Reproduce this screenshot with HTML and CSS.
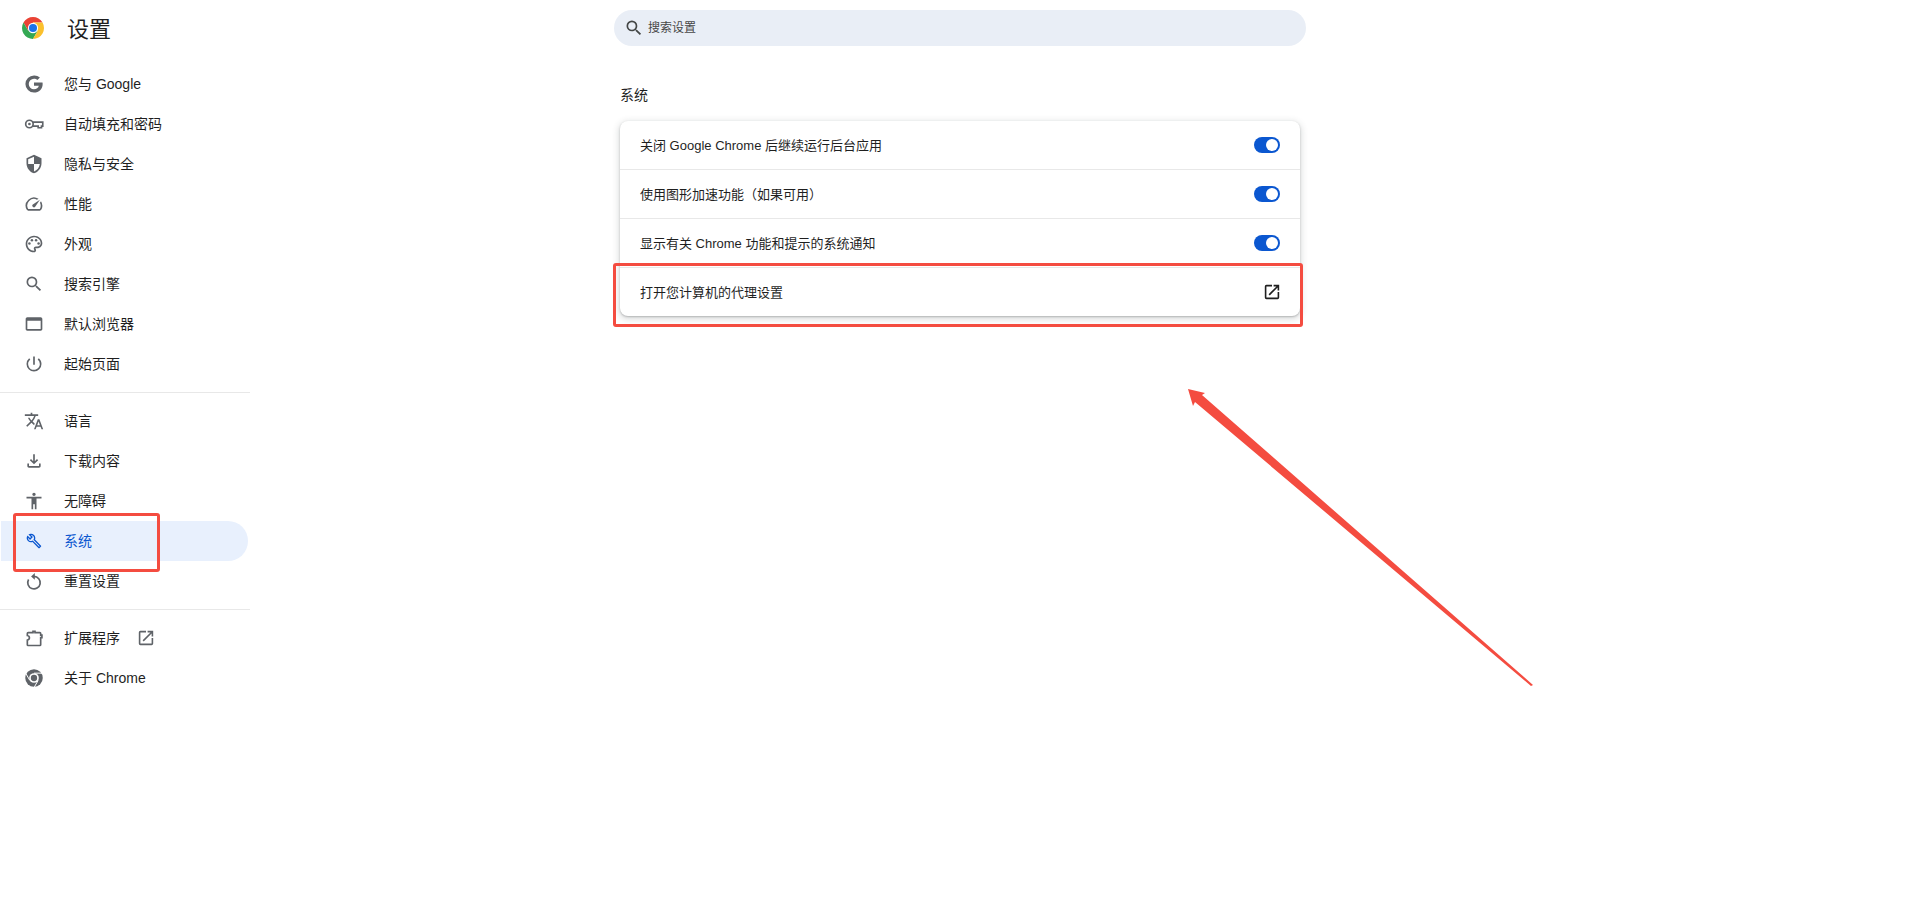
FILE: index.html
```html
<!DOCTYPE html>
<html lang="zh-CN">
<head>
    <meta charset="UTF-8">
    <meta name="viewport" content="width=device-width, initial-scale=1.0">
    <title>设置</title>
    <link rel="stylesheet" href="styles.css">
</head>
<body>
    <div class="page">
        <aside class="sidebar">
            <header class="brand">
                <svg class="brand-logo" viewBox="0 0 24 24">
                    <path fill="#ea4335" d="M22.39 6A12 12 0 0 0 1.61 6L6.8 15 12 12V6z"/>
                    <path fill="#34a853" d="M1.61 6A12 12 0 0 0 12 24l5.2-9L12 12l-5.2 3z"/>
                    <path fill="#fbc02d" d="M12 24A12 12 0 0 0 22.39 6H12v6l5.2 3z"/>
                    <circle cx="12" cy="12" r="5.6" fill="#fff"/>
                    <circle cx="12" cy="12" r="4.4" fill="#1a73e8"/>
                </svg>
                <h1 class="brand-title">设置</h1>
            </header>

            <nav class="nav">
                <a class="nav-item">
                    <svg class="icon" viewBox="0 0 24 24"><path d="M22.2 10.2H12v4h5.8c-.6 2.6-2.8 4.1-5.8 4.1a6.3 6.3 0 0 1 0-12.6c1.6 0 3 .6 4.1 1.5l3-3A10.3 10.3 0 0 0 12 1.7a10.3 10.3 0 1 0 0 20.6c5.9 0 10.4-4.2 10.4-10.3 0-.6-.1-1.2-.2-1.8z"/></svg>
                    <span>您与 Google</span>
                </a>
                <a class="nav-item">
                    <svg class="icon icon-line" viewBox="0 0 24 24">
                        <circle cx="6.500" cy="12" r="4.500"/>
                        <circle class="icon-dot" cx="6.500" cy="12" r="1.600"/>
                        <path d="M10.500 9.800H22.500v4.700h-1.500v2h-4v-2h-6.500"/>
                    </svg>
                    <span>自动填充和密码</span>
                </a>
                <a class="nav-item">
                    <svg class="icon" viewBox="0 0 24 24"><path d="M12 1 3 5v6c0 5.55 3.84 10.74 9 12 5.16-1.26 9-6.45 9-12V5l-9-4zm0 10.99h7c-.53 4.12-3.28 7.79-7 8.94V12H5V6.3l7-3.11v8.8z"/></svg>
                    <span>隐私与安全</span>
                </a>
                <a class="nav-item">
                    <svg class="icon" viewBox="0 0 24 24"><path d="M20.38 8.57l-1.23 1.85a8 8 0 0 1-.22 7.58H5.07A8 8 0 0 1 15.58 6.85l1.85-1.23A10 10 0 0 0 3.35 19a2 2 0 0 0 1.72 1h13.85a2 2 0 0 0 1.74-1 10 10 0 0 0-.27-10.44zm-9.79 6.84a2 2 0 0 0 2.83 0l5.66-8.49-8.49 5.66a2 2 0 0 0 0 2.83z"/></svg>
                    <span>性能</span>
                </a>
                <a class="nav-item">
                    <svg class="icon" viewBox="0 0 24 24"><path d="M12 22C6.49 22 2 17.51 2 12S6.49 2 12 2s10 4.04 10 9c0 3.31-2.69 6-6 6h-1.77c-.28 0-.5.22-.5.5 0 .12.05.23.13.33.41.47.64 1.06.64 1.67 0 1.38-1.12 2.5-2.5 2.5zm0-18c-4.41 0-8 3.59-8 8s3.59 8 8 8c.28 0 .5-.22.5-.5a.54.54 0 0 0-.14-.35c-.41-.46-.63-1.05-.63-1.65 0-1.38 1.12-2.5 2.5-2.5H16c2.21 0 4-1.79 4-4 0-3.86-3.59-7-8-7z"/><circle cx="6.5" cy="11.500" r="1.500"/><circle cx="9.500" cy="7.500" r="1.500"/><circle cx="14.500" cy="7.500" r="1.500"/><circle cx="17.500" cy="11.500" r="1.500"/></svg>
                    <span>外观</span>
                </a>
                <a class="nav-item">
                    <svg class="icon" viewBox="0 0 24 24"><path d="M15.5 14h-.79l-.28-.27A6.471 6.471 0 0 0 16 9.500 6.500 6.500 0 1 0 9.500 16c1.610 0 3.090-.59 4.230-1.570l.27.28v.79l5 4.990L20.490 19l-4.990-5zm-6 0C7.010 14 5 11.990 5 9.500S7.010 5 9.500 5 14 7.010 14 9.500 11.990 14 9.500 14z"/></svg>
                    <span>搜索引擎</span>
                </a>
                <a class="nav-item">
                    <svg class="icon" viewBox="0 0 24 24"><path d="M20 4H4c-1.110 0-2 .9-2 2v12c0 1.100.89 2 2 2h16c1.100 0 2-.9 2-2V6c0-1.100-.89-2-2-2zm0 14H4V8h16v10z"/></svg>
                    <span>默认浏览器</span>
                </a>
                <a class="nav-item">
                    <svg class="icon" viewBox="0 0 24 24"><path d="M13 3h-2v10h2V3zm4.830 2.170l-1.420 1.420A6.920 6.920 0 0 1 19 12c0 3.870-3.130 7-7 7A6.995 6.995 0 0 1 7.580 6.580L6.170 5.170A8.932 8.932 0 0 0 3 12a9 9 0 0 0 18 0c0-2.740-1.230-5.180-3.170-6.830z"/></svg>
                    <span>起始页面</span>
                </a>

                <hr class="nav-divider">

                <a class="nav-item">
                    <svg class="icon" viewBox="0 0 24 24"><path d="M12.870 15.070l-2.540-2.510.03-.03A17.520 17.520 0 0 0 14.070 6H17V4h-7V2H8v2H1v1.990h11.170C11.500 7.920 10.440 9.750 9 11.350 8.070 10.320 7.300 9.190 6.690 8h-2c.73 1.630 1.730 3.170 2.980 4.560l-5.090 5.020L4 19l5-5 3.110 3.110.76-2.040zM18.500 10h-2L12 22h2l1.120-3h4.750L21 22h2l-4.500-12zm-2.620 7l1.620-4.330L19.120 17h-3.240z"/></svg>
                    <span>语言</span>
                </a>
                <a class="nav-item">
                    <svg class="icon" viewBox="0 0 24 24"><path d="M18 15v3H6v-3H4v3c0 1.100.9 2 2 2h12c1.100 0 2-.9 2-2v-3h-2zm-1-4l-1.410-1.410L13 12.170V4h-2v8.170L8.410 9.590 7 11l5 5 5-5z"/></svg>
                    <span>下载内容</span>
                </a>
                <a class="nav-item">
                    <svg class="icon" viewBox="0 0 24 24"><path d="M12 2c1.100 0 2 .9 2 2s-.9 2-2 2-2-.9-2-2 .9-2 2-2zm9 7h-6v13h-2v-6h-2v6H9V9H3V7h18v2z"/></svg>
                    <span>无障碍</span>
                </a>
                <a class="nav-item active">
                    <svg class="icon" viewBox="-3 -3 30 30"><path d="M22.610 18.990l-9.080-9.080c.93-2.340.45-5.100-1.440-7C9.790.61 6.210.4 3.660 2.260L7.500 6.110 6.080 7.520 2.250 3.690C.39 6.230.6 9.820 2.900 12.110c1.860 1.860 4.570 2.350 6.880 1.480l9.110 9.110c.39.39 1.020.39 1.410 0l2.300-2.300c.4-.38.4-1.010.01-1.410zm-3 1.600l-9.460-9.460c-.61.45-1.290.72-2 .82-1.360.2-2.790-.21-3.830-1.250C3.370 9.760 2.930 8.500 3 7.260l3.090 3.090 4.240-4.240-3.090-3.090c1.240-.07 2.490.37 3.440 1.310 1.080 1.080 1.490 2.570 1.240 3.960-.12.71-.42 1.370-.88 1.960l9.450 9.450-.88.88z"/></svg>
                    <span>系统</span>
                </a>
                <a class="nav-item">
                    <svg class="icon icon-line" viewBox="0 0 24 24">
                        <path d="M12 6.500a7.500 7.500 0 1 1-6.500 3.700"/>
                        <path class="icon-dot" d="M13 2.500 8.500 6.500l4.500 4z"/>
                    </svg>
                    <span>重置设置</span>
                </a>

                <hr class="nav-divider">

                <a class="nav-item">
                    <svg class="icon icon-line" viewBox="0 0 24 24"><path d="M5 5.500h5.800v-1.500h2.400v1.500h5.800a1 1 0 0 1 1 1v2h1.500v3h-1.500v8.500a1 1 0 0 1-1 1H5a1 1 0 0 1-1-1v-5.500c1.600-.3 2.500-1.300 2.500-2.800s-.9-2.400-2.500-2.700V6.500a1 1 0 0 1 1-1z"/></svg>
                    <span>扩展程序</span>
                    <svg class="icon icon-link" viewBox="2 2 20 20"><path d="M19 19H5V5h7V3H5a2 2 0 0 0-2 2v14a2 2 0 0 0 2 2h14c1.100 0 2-.9 2-2v-7h-2v7zM14 3v2h3.590l-9.830 9.830 1.410 1.410L19 6.410V10h2V3h-7z"/></svg>
                </a>
                <a class="nav-item">
                    <svg class="icon" viewBox="0 0 24 24">
                        <circle cx="12" cy="12" r="10.500"/>
                        <circle cx="12" cy="12" r="5.800" fill="#fff"/>
                        <circle cx="12" cy="12" r="3.800"/>
                        <path fill="none" stroke="#fff" stroke-width="1.200" d="M12 6.200h11M7 14.900 1.500 5.400M17 14.900l-5.500 9.500"/>
                    </svg>
                    <span>关于 Chrome</span>
                </a>
            </nav>
        </aside>

        <main class="content">
            <div class="search">
                <svg class="search-icon" viewBox="0 0 24 24"><path d="M15.500 14h-.79l-.28-.27A6.471 6.471 0 0 0 16 9.500 6.500 6.500 0 1 0 9.500 16c1.610 0 3.090-.59 4.230-1.570l.27.28v.79l5 4.990L20.490 19l-4.990-5zm-6 0C7.010 14 5 11.990 5 9.500S7.010 5 9.500 5 14 7.010 14 9.500 11.990 14 9.500 14z"/></svg>
                <input class="search-input" type="text" placeholder="搜索设置">
            </div>

            <section class="section">
                <h2 class="section-title">系统</h2>
                <div class="card">
                    <div class="row">
                        <span>关闭 Google Chrome 后继续运行后台应用</span>
                        <span class="toggle"></span>
                    </div>
                    <div class="row">
                        <span>使用图形加速功能（如果可用）</span>
                        <span class="toggle"></span>
                    </div>
                    <div class="row">
                        <span>显示有关 Chrome 功能和提示的系统通知</span>
                        <span class="toggle"></span>
                    </div>
                    <div class="row">
                        <span>打开您计算机的代理设置</span>
                        <svg class="row-link" viewBox="2 2 20 20"><path d="M19 19H5V5h7V3H5a2 2 0 0 0-2 2v14a2 2 0 0 0 2 2h14c1.100 0 2-.9 2-2v-7h-2v7zM14 3v2h3.590l-9.830 9.830 1.410 1.410L19 6.410V10h2V3h-7z"/></svg>
                    </div>
                </div>
            </section>
        </main>
    </div>

    <!-- red marks drawn on top of the screenshot -->
    <div class="mark mark-nav"></div>
    <div class="mark mark-row"></div>
    <svg class="mark-arrow" viewBox="0 0 1920 919">
        <polygon fill="#f44c40" points="1188,389 1205,393 1202,395 1533,685 1531,686 1195,402 1193,406"/>
    </svg>
</body>
</html>
```

FILE: styles.css
```css
* {
    box-sizing: border-box;
}

body {
    margin: 0;
    background-color: #fff;
    color: #1f1f1f;
    font-family: "Liberation Sans", "Noto Sans CJK SC", sans-serif;
    overflow: hidden;
}

.page {
    display: grid;
    grid-template-columns: 250px 1fr 250px;
    min-height: 919px;
}

/* Sidebar */
.brand {
    display: flex;
    align-items: center;
    height: 64px;
    padding: 0 0 8px 22px;
}

.brand-logo {
    width: 22px;
    height: 22px;
    margin-right: 23px;
}

.brand-title {
    margin: 3px 0 0;
    font-size: 22px;
    font-weight: 400;
    line-height: 30px;
}

.nav-item {
    display: flex;
    align-items: center;
    width: 247px;
    height: 40px;
    margin-left: 1px;
    padding-left: 23px;
    font-size: 14px;
    color: #1f1f1f;
    border-radius: 0 20px 20px 0;
}

.nav-item span {
    margin-top: -2px;
}

.nav-item .icon {
    flex: none;
    width: 20px;
    height: 20px;
    margin-right: 20px;
    fill: #5f6368;
}

.nav-item .icon-line {
    fill: none;
    stroke: #5f6368;
    stroke-width: 2;
}

.nav-item .icon-line .icon-dot {
    fill: #5f6368;
    stroke: none;
}

.nav-item .icon-link {
    width: 16px;
    height: 16px;
    margin: 0 0 0 18px;
}

.nav-item.active {
    background-color: #e8f0fd;
    color: #0b57d0;
}

.nav-item.active .icon {
    fill: #0b57d0;
}

.nav-divider {
    height: 1px;
    margin: 8px 0;
    border: none;
    background-color: #e8e8e8;
}

/* Main column */
.content {
    display: flex;
    flex-direction: column;
    align-items: center;
    padding-top: 10px;
}

.search {
    display: flex;
    align-items: center;
    width: 692px;
    height: 36px;
    padding-left: 10px;
    background-color: #e9eef6;
    border-radius: 18px;
}

.search-icon {
    flex: none;
    width: 20px;
    height: 20px;
    margin-right: 4px;
    fill: #444746;
}

.search-input {
    flex: 1;
    padding: 0;
    border: none;
    outline: none;
    background: none;
    font-family: inherit;
    font-size: 12px;
}

.search-input::placeholder {
    color: #474747;
    opacity: 1;
}

.section {
    width: 680px;
}

.section-title {
    margin: 0;
    padding: 39px 0 16px;
    font-size: 14px;
    font-weight: 400;
    line-height: 20px;
}

.card {
    background-color: #fff;
    border-radius: 8px;
    box-shadow: 0 1px 2px rgba(60, 64, 67, 0.3), 0 2px 6px 2px rgba(60, 64, 67, 0.15);
}

.row {
    display: flex;
    align-items: center;
    justify-content: space-between;
    height: 49px;
    padding: 0 20px;
    border-top: 1px solid #e8e8e8;
    font-size: 13px;
}

.row:first-child {
    height: 48px;
    border-top: none;
}

.row span:first-child {
    margin-top: -2px;
}

.toggle {
    position: relative;
    width: 26px;
    height: 16px;
    background-color: #0b57d0;
    border-radius: 8px;
}

.toggle::after {
    content: "";
    position: absolute;
    top: 2px;
    right: 2px;
    width: 12px;
    height: 12px;
    background-color: #fff;
    border-radius: 50%;
}

.row-link {
    width: 16px;
    height: 16px;
    fill: #1f1f1f;
}

/* Annotations */
.mark {
    position: absolute;
    border: 3px solid #f44c40;
    border-radius: 3px;
}

.mark-nav {
    left: 13px;
    top: 513px;
    width: 147px;
    height: 59px;
}

.mark-row {
    left: 613px;
    top: 263px;
    width: 690px;
    height: 64px;
}

.mark-arrow {
    position: absolute;
    left: 0;
    top: 0;
    width: 1920px;
    height: 919px;
    pointer-events: none;
}
```
